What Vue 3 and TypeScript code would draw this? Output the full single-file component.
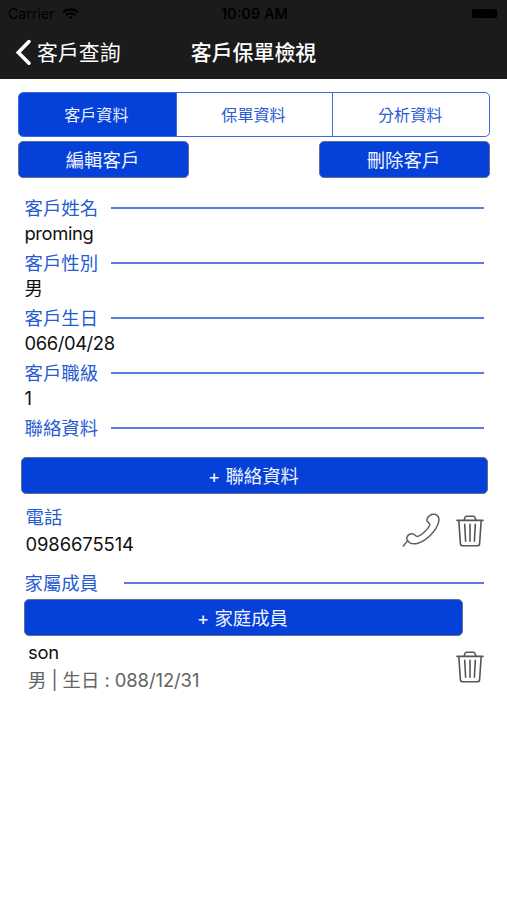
<script setup lang="ts">
import { ref } from 'vue'

interface Field {
  label: string
  value: string
}

const tabs: string[] = ['客戶資料', '保單資料', '分析資料']
const activeTab = ref(0)

const fields: Field[] = [
  { label: '客戶姓名', value: 'proming' },
  { label: '客戶性別', value: '男' },
  { label: '客戶生日', value: '066/04/28' },
  { label: '客戶職級', value: '1' },
]

const trashPath =
  'M1 5.4H27M8 5.2L9 2.4Q9.4 1.3 10.6 1.3H17.4Q18.6 1.3 19 2.4L20 5.2M2.8 5.4L4.4 28.6Q4.6 30.8 6.6 30.8H21.4Q23.4 30.8 23.6 28.6L25.2 5.4M8.7 9.3L9.6 26.2M14 9.3V26.2M19.3 9.3L18.4 26.2'
</script>

<template>
  <div class="screen">
    <header class="header">
      <div class="status">
        <div class="carrier">
          <span>Carrier</span>
          <svg class="wifi" width="17" height="12" viewBox="0 0 17 12" fill="none" stroke="#000" stroke-width="2.3">
            <path d="M1 4.3C5.2.3 11.8.3 16 4.3" />
            <path d="M3.9 7.2C6.6 4.7 10.4 4.7 13.1 7.2" />
            <path d="M6.3 9.2C7.7 8 9.3 8 10.7 9.2L8.5 11.4Z" fill="#000" stroke="none" />
          </svg>
        </div>
        <span class="time">10:09 AM</span>
        <div class="battery-slot"><span class="battery"></span></div>
      </div>
      <nav class="nav">
        <button class="back">
          <svg width="17" height="27" viewBox="0 0 17 27" fill="none" stroke="#fff" stroke-width="3.6" stroke-linecap="round" stroke-linejoin="miter">
            <path d="M14 2.6L3.3 13.5L14 24.2" />
          </svg>
          <span>客戶查詢</span>
        </button>
        <h1 class="title">客戶保單檢視</h1>
      </nav>
    </header>

    <main class="content">
      <div class="tabs">
        <button
          v-for="(tab, i) in tabs"
          :key="tab"
          class="tab"
          :class="{ active: i === activeTab }"
          @click="activeTab = i"
        >{{ tab }}</button>
      </div>

      <div class="actions">
        <button class="btn half">編輯客戶</button>
        <button class="btn half">刪除客戶</button>
      </div>

      <section class="fields">
        <div v-for="field in fields" :key="field.label" class="field">
          <div class="heading"><span class="label">{{ field.label }}</span><i class="rule"></i></div>
          <div class="value">{{ field.value }}</div>
        </div>
        <div class="heading"><span class="label">聯絡資料</span><i class="rule"></i></div>
      </section>

      <button class="btn add-contact">+ 聯絡資料</button>

      <div class="contact">
        <div class="contact-text">
          <div class="label">電話</div>
          <div class="number">0986675514</div>
        </div>
        <svg class="phone" width="38" height="34" viewBox="0 0 38 34" fill="none" stroke="#5d5d61" stroke-width="1.5" stroke-linecap="round" stroke-linejoin="round">
          <path d="M1.3 33L5.7 27.6C3.5 25.2 5.7 20.8 10 20.8C13 20.8 13.3 24 16 23.4C20 22.2 26.5 15.5 27.8 12C28.3 9.6 24.8 9.8 24.9 6.8C25.1 3.2 29.2.8 32.7 1.3C36.2 2 37.6 5 36.6 9.2C34.6 17.5 25 27.2 16 30.2C11.5 31.5 7.8 30.8 5.7 27.6" />
        </svg>
        <svg class="trash" width="28" height="32" viewBox="0 0 28 32" fill="none" stroke="#56565a" stroke-width="1.6" stroke-linecap="round" stroke-linejoin="round">
          <path :d="trashPath" />
        </svg>
      </div>

      <div class="heading family"><span class="label">家屬成員</span><i class="rule"></i></div>
      <button class="btn add-family">+ 家庭成員</button>

      <div class="member">
        <div class="member-text">
          <div class="name">son</div>
          <div class="detail">男 | 生日 : 088/12/31</div>
        </div>
        <svg class="trash" width="28" height="32" viewBox="0 0 28 32" fill="none" stroke="#56565a" stroke-width="1.6" stroke-linecap="round" stroke-linejoin="round">
          <path :d="trashPath" />
        </svg>
      </div>
    </main>
  </div>
</template>

<style>
body {
  margin: 0;
  background: #fff;
}
</style>

<style scoped>
.screen {
  min-height: 900px;
  background: #fff;
  color: #111;
  font-family: Inter, "Noto Sans CJK TC", sans-serif;
  font-size: 18.4px;
}
button {
  margin: 0;
  padding: 0;
  border: 0;
  background: none;
  font: inherit;
  color: inherit;
}
.header {
  height: 79px;
  background: #1b1b1b;
}
.status {
  display: grid;
  grid-template-columns: 1fr auto 1fr;
  align-items: center;
  height: 27px;
  padding: 0 10px 0 8px;
  color: #000;
}
.carrier {
  display: flex;
  align-items: center;
  gap: 7px;
  font-size: 14.2px;
}
.time {
  padding-left: 4px;
  font-size: 14.6px;
  font-weight: 600;
}
.battery-slot {
  display: flex;
  justify-content: flex-end;
}
.battery {
  width: 25px;
  height: 9px;
  border-radius: 2px;
  background: #000;
}
.nav {
  display: grid;
  grid-template-columns: 1fr auto 1fr;
  align-items: center;
  height: 51px;
  color: #fff;
}
.back {
  display: flex;
  align-items: center;
  gap: 5px;
  padding-left: 15px;
  font-size: 20.9px;
  line-height: 30px;
}
.back span {
  padding-top: 1px;
}
.title {
  margin: 0;
  padding-top: 1px;
  font-size: 20.9px;
  line-height: 30px;
  font-weight: 500;
}
.content {
  padding-top: 13px;
}
.tabs {
  display: grid;
  grid-template-columns: repeat(3, 1fr);
  box-sizing: border-box;
  height: 45px;
  margin: 0 17px 0 18px;
  border: 1.5px solid #3c6bdc;
  border-radius: 5px;
  overflow: hidden;
}
.tab {
  padding: 0 2px 2px 0;
  color: #275bd2;
  font-size: 16.1px;
}
.tab + .tab {
  border-left: 1.5px solid #3c6bdc;
}
.tab.active {
  background: #0540d8;
  color: #e6edff;
}
.actions {
  display: flex;
  justify-content: space-between;
  margin: 4px 17px 0 18px;
}
.btn {
  display: block;
  box-sizing: border-box;
  height: 37px;
  padding-right: 2px;
  border: 1px solid #62708f;
  border-radius: 5px;
  background: #0540d8;
  color: #f0f4ff;
  line-height: 34px;
  text-align: center;
}
.half {
  width: 171px;
}
.fields {
  padding: 17px 23px 0 24.5px;
}
.field {
  height: 55px;
}
.heading {
  display: flex;
  align-items: center;
  gap: 12.5px;
  height: 26px;
}
.label {
  color: #275bd2;
  line-height: 26px;
}
.rule {
  flex: 1;
  height: 2px;
  background: #577fdb;
}
.value {
  line-height: 24px;
  letter-spacing: -0.4px;
}
.add-contact {
  width: 467px;
  margin: 16px 0 0 21px;
}
.contact {
  display: flex;
  align-items: flex-start;
  padding: 10px 23px 0 25.5px;
  height: 67px;
  box-sizing: border-box;
}
.contact-text,
.member-text {
  flex: 1;
}
.number {
  line-height: 29px;
  letter-spacing: -0.08px;
}
.phone {
  margin: 9px 16px 0 0;
}
.contact .trash {
  margin-top: 11px;
}
.family {
  gap: 25.5px;
  margin: 9px 23px 0 24.5px;
}
.add-family {
  width: 439px;
  margin: 3px 0 0 24px;
}
.member {
  display: flex;
  align-items: flex-start;
  padding: 4px 23px 0 28px;
}
.name {
  line-height: 25px;
  letter-spacing: -0.3px;
}
.detail {
  color: #636363;
  line-height: 30px;
  letter-spacing: -0.06px;
}
.member .trash {
  margin-top: 11px;
}
</style>
